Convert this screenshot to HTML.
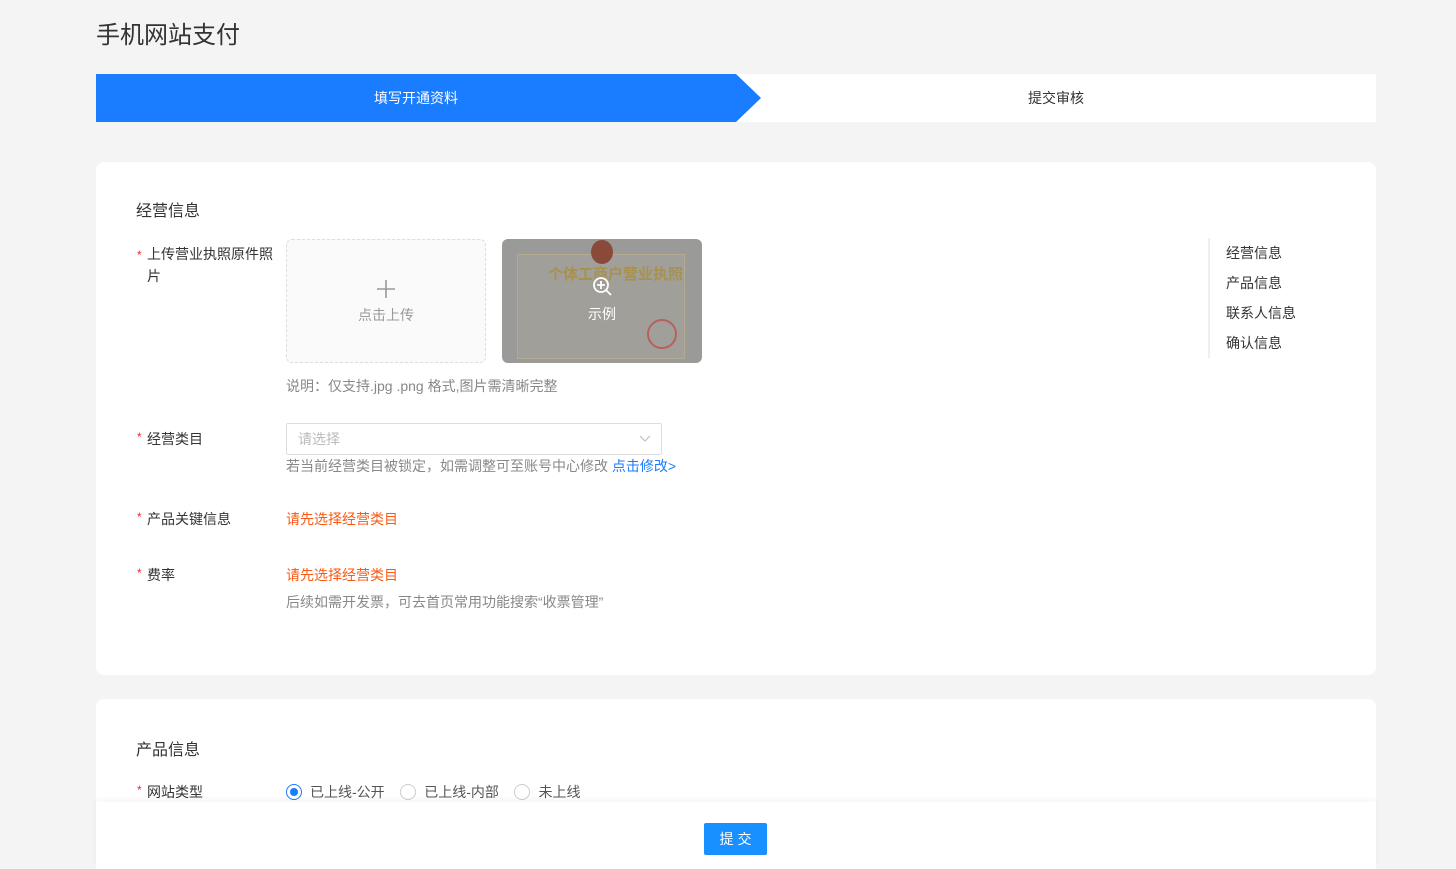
<!DOCTYPE html>
<html><head><meta charset="utf-8"><style>
*{margin:0;padding:0;box-sizing:border-box}
html,body{width:1456px;height:869px;overflow:hidden}
body{background:#f4f4f4;font-family:"Liberation Sans","Noto Sans CJK SC",sans-serif;color:#333;position:relative}
.abs{position:absolute}
.title{left:96px;top:15px;font-size:24px;color:#333}
.steps{left:96px;top:74px;width:1280px;height:48px;background:#fff}
.card{background:#fff;border-radius:8px;left:96px;width:1280px}
.h{font-size:16px;color:#333}
.lbl{font-size:14px;color:#333;padding-left:11px}
.lbl:before{content:"*";color:#f5222d;font-size:12px;position:absolute;left:1px;top:1px}
.gray{font-size:14px;color:#888}
.red{font-size:14px;color:#fa5a14}
.nav div{font-size:14px;color:#333;height:30px;line-height:30px}
.radio{width:16px;height:16px;border:1px solid #ccc;border-radius:50%;display:inline-block;vertical-align:-3px;margin-right:8px}
</style></head><body>
<div class="abs title">手机网站支付</div>
<div class="abs steps">
 <svg class="abs" style="left:0;top:0" width="665" height="48"><polygon points="0,0 640,0 665,24 640,48 0,48" fill="#1a7cff"/></svg>
 <div class="abs" style="left:0;width:640px;top:14px;text-align:center;color:#fff;font-size:14px">填写开通资料</div>
 <div class="abs" style="left:640px;width:640px;top:14px;text-align:center;color:#333;font-size:14px">提交审核</div>
</div>
<div class="abs card" style="top:162px;height:513px">
 <div class="abs h" style="left:40px;top:35px">经营信息</div>
 <div class="abs lbl" style="left:40px;top:81px;width:140px;line-height:22px">上传营业执照原件照片</div>
 <div class="abs" style="left:190px;top:77px;width:200px;height:124px;border:1px dashed #ddd;border-radius:6px;background:#fafafa">
  <svg class="abs" style="left:89px;top:39px" width="20" height="20"><path d="M10 1V19M1 10H19" stroke="#999" stroke-width="1.6"/></svg>
  <div class="abs" style="left:0;width:198px;top:65px;text-align:center;font-size:14px;color:#999">点击上传</div>
 </div>
 <div class="abs" style="left:406px;top:77px;width:200px;height:124px;border-radius:6px;background:#9a9a98;overflow:hidden">
  <div class="abs" style="left:15px;top:15px;width:168px;height:105px;border:1px solid #b3aa90;background:#a19f9a"></div>
  <div class="abs" style="left:89px;top:1px;width:22px;height:24px;border-radius:50%;background:#8a4a3a"></div>
  <div class="abs" style="left:46px;top:24px;font-size:15px;font-weight:bold;color:#a8914e">个体工商户营业执照</div>
  <div class="abs" style="left:145px;top:80px;width:30px;height:30px;border-radius:50%;border:2px solid #b8605a"></div>
  <svg class="abs" style="left:90px;top:37px" width="22" height="22"><circle cx="9" cy="9" r="7" fill="none" stroke="#fff" stroke-width="1.8"/><path d="M9 5V13M5 9H13M14 14L19 19" stroke="#fff" stroke-width="1.8"/></svg>
  <div class="abs" style="left:0;width:200px;top:65px;text-align:center;font-size:14px;color:#fff">示例</div>
 </div>
 <div class="abs gray" style="left:190px;top:214px">说明：仅支持.jpg .png 格式,图片需清晰完整</div>
 <div class="abs lbl" style="left:40px;top:267px">经营类目</div>
 <div class="abs" style="left:190px;top:261px;width:376px;height:32px;border:1px solid #ddd;border-radius:2px">
  <div class="abs" style="left:11px;top:5px;font-size:14px;color:#bbb">请选择</div>
  <svg class="abs" style="left:352px;top:11px" width="12" height="8"><path d="M1 1L6 6L11 1" fill="none" stroke="#bbb"/></svg>
 </div>
 <div class="abs gray" style="left:190px;top:294px">若当前经营类目被锁定，如需调整可至账号中心修改 <span style="color:#1a7cff">点击修改&gt;</span></div>
 <div class="abs lbl" style="left:40px;top:347px">产品关键信息</div>
 <div class="abs red" style="left:190px;top:347px">请先选择经营类目</div>
 <div class="abs lbl" style="left:40px;top:403px">费率</div>
 <div class="abs red" style="left:190px;top:403px">请先选择经营类目</div>
 <div class="abs gray" style="left:190px;top:430px">后续如需开发票，可去首页常用功能搜索“收票管理”</div>
 <div class="abs nav" style="left:1112px;top:76px;border-left:2px solid #eee;padding-left:16px;height:120px">
  <div>经营信息</div><div>产品信息</div><div>联系人信息</div><div>确认信息</div>
 </div>
</div>
<div class="abs card" style="top:699px;height:170px;border-radius:8px 8px 0 0">
 <div class="abs h" style="left:40px;top:37px">产品信息</div>
 <div class="abs lbl" style="left:40px;top:83px">网站类型</div>
 <div class="abs" style="left:190px;top:83px;font-size:14px;color:#555;white-space:nowrap">
  <span class="radio" style="border-color:#1a7cff;position:relative"><span style="position:absolute;left:3px;top:3px;width:8px;height:8px;border-radius:50%;background:#1a7cff"></span></span>已上线-公开&nbsp;&nbsp;&nbsp;
  <span class="radio"></span>已上线-内部&nbsp;&nbsp;&nbsp;
  <span class="radio"></span>未上线
 </div>
</div>
<div class="abs" style="left:96px;top:802px;width:1280px;height:67px;background:#fff;box-shadow:0 -3px 6px rgba(0,0,0,0.04)">
 <div class="abs" style="left:608px;top:21px;width:63px;height:32px;background:#1890ff;border-radius:2px;color:#fff;font-size:14px;text-align:center;line-height:32px;letter-spacing:4px;padding-left:4px">提交</div>
</div>
</body></html>
